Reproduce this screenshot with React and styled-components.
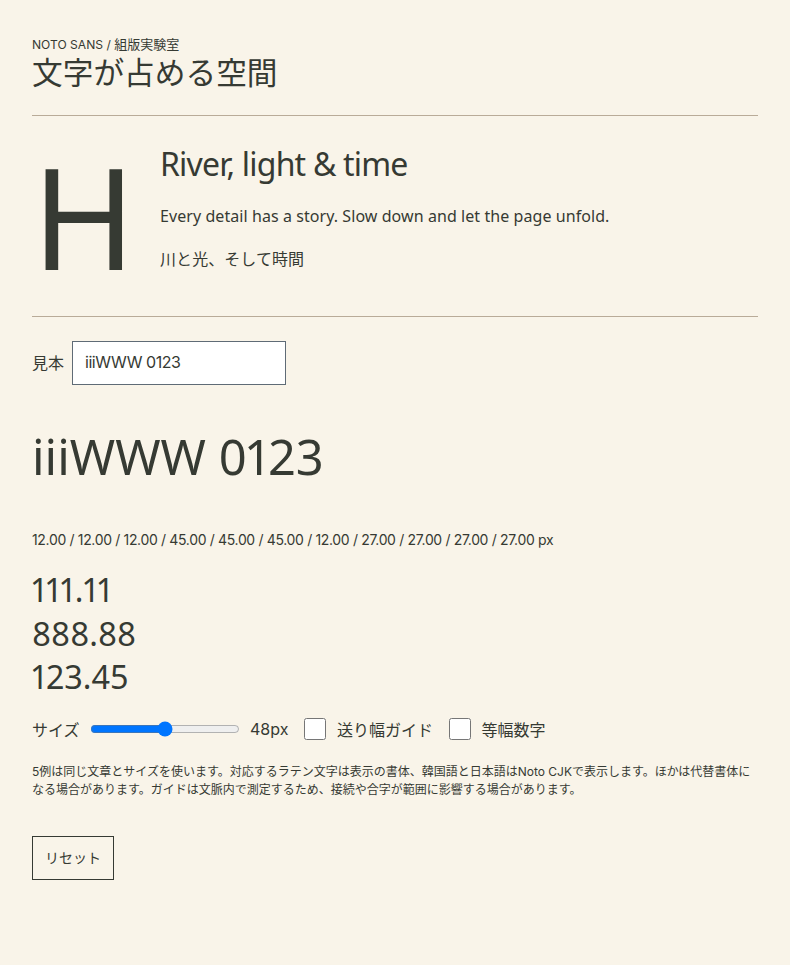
import styled, { createGlobalStyle } from "styled-components";

const UI_FONT = `Inter, "Noto Sans CJK JP", sans-serif`;
const TEXT_FONT = `"Noto Sans", "Noto Sans CJK JP", sans-serif`;

const GlobalStyle = createGlobalStyle`
  html, body {
    margin: 0;
    background: #f9f4e9;
  }
`;

const App = () => {
  return (
    <Page>
      <GlobalStyle />
      <Header>
        <Eyebrow>NOTO SANS / <EyebrowJa>組版実験室</EyebrowJa></Eyebrow>
        <Title>文字が占める空間</Title>
      </Header>
      <Hero>
        <BigLetter>H</BigLetter>
        <HeroCopy>
          <HeroTitle>River, light &amp; time</HeroTitle>
          <HeroText>Every detail has a story. Slow down and let the page unfold.</HeroText>
          <HeroText>川と光、そして時間</HeroText>
        </HeroCopy>
      </Hero>
      <SampleRow>
        <SampleLabel htmlFor="sample">見本</SampleLabel>
        <SampleInput id="sample" defaultValue="iiiWWW 0123" />
      </SampleRow>
      <Specimen>iiiWWW 0123</Specimen>
      <Metrics>12.00 / 12.00 / 12.00 / 45.00 / 45.00 / 45.00 / 12.00 / 27.00 / 27.00 / 27.00 / 27.00 px</Metrics>
      <Numbers>
        <div>111.11</div>
        <div>888.88</div>
        <div>123.45</div>
      </Numbers>
      <Controls>
        <Field>
          <ControlLabel>サイズ</ControlLabel>
          <Slider type="range" min="16" max="80" defaultValue="48" />
          <ControlLabel>48px</ControlLabel>
        </Field>
        <Field>
          <Check type="checkbox" />
          <ControlLabel>送り幅ガイド</ControlLabel>
        </Field>
        <Field>
          <Check type="checkbox" />
          <ControlLabel>等幅数字</ControlLabel>
        </Field>
      </Controls>
      <Note>
        5例は同じ文章とサイズを使います。対応するラテン文字は表示の書体、韓国語と日本語はNoto CJKで表示します。ほかは代替書体になる場合があります。ガイドは文脈内で測定するため、接続や合字が範囲に影響する場合があります。
      </Note>
      <ResetButton type="button">リセット</ResetButton>
    </Page>
  );
};
export default App;

//==============================styled-components

const Page = styled.main`
  box-sizing: border-box;
  width: 790px;
  min-height: 965px;
  padding: 36px 32px 0;
  color: #363a33;
  font-family: ${UI_FONT};
`;

const Header = styled.header`
  height: 79px;
  border-bottom: 1px solid #b9ab98;
`;

const Eyebrow = styled.div`
  font-size: 12.1px;
  line-height: 17px;
`;

const EyebrowJa = styled.span`
  font-size: 13px;
`;

const Title = styled.h1`
  margin: 0;
  font-family: ${UI_FONT};
  font-size: 30.7px;
  font-weight: 400;
  line-height: 40px;
`;

const Hero = styled.section`
  display: flex;
  height: 200px;
  border-bottom: 1px solid #b9ab98;
`;

const BigLetter = styled.div`
  width: 128px;
  flex: none;
  font-family: ${TEXT_FONT};
  font-size: 140px;
  line-height: 200px;
`;

const HeroCopy = styled.div`
  padding-top: 27px;
  font-family: ${TEXT_FONT};
`;

const HeroTitle = styled.h2`
  margin: 0 0 18px;
  font-size: 32px;
  font-weight: 400;
  line-height: 42px;
  letter-spacing: -0.8px;
`;

const HeroText = styled.p`
  margin: 0 0 17px;
  font-size: 16px;
  line-height: 26px;
  letter-spacing: 0.07px;
`;

const SampleRow = styled.div`
  display: flex;
  align-items: center;
  gap: 8px;
  margin-top: 24px;
`;

const SampleLabel = styled.label`
  padding-bottom: 2px;
  font-size: 16px;
`;

const SampleInput = styled.input`
  box-sizing: border-box;
  width: 214px;
  height: 44px;
  padding: 0 12px 2px;
  border: 1px solid #5f6b76;
  border-radius: 0;
  background: #fff;
  color: #363a33;
  font-family: ${UI_FONT};
  font-size: 16px;
  letter-spacing: -0.45px;
`;

const Specimen = styled.div`
  margin-top: 40px;
  font-family: ${TEXT_FONT};
  font-size: 48.8px;
  line-height: 62px;
  font-variant-numeric: proportional-nums;
`;

const Metrics = styled.div`
  margin-top: 44px;
  font-size: 14px;
  line-height: 18px;
  letter-spacing: -0.34px;
`;

const Numbers = styled.div`
  margin-top: 19px;
  font-family: ${TEXT_FONT};
  font-size: 32.4px;
  line-height: 43.5px;
  font-variant-numeric: proportional-nums;
`;

const Controls = styled.div`
  display: flex;
  align-items: center;
  gap: 16px;
  height: 24px;
  margin-top: 18px;
`;

const Field = styled.div`
  display: flex;
  align-items: center;
  gap: 10.5px;
`;

const ControlLabel = styled.span`
  font-size: 16px;
`;

const Slider = styled.input`
  width: 149.5px;
  margin: 0;
`;

const Check = styled.input`
  width: 22px;
  height: 22px;
  margin: 0;
`;

const Note = styled.p`
  margin: 22px 0 0;
  font-size: 12px;
  line-height: 18px;
`;

const ResetButton = styled.button`
  display: block;
  box-sizing: border-box;
  width: 82px;
  height: 44px;
  margin-top: 37px;
  padding: 0 0 2px;
  border: 1px solid #363a33;
  border-radius: 0;
  background: transparent;
  color: #363a33;
  font-family: ${UI_FONT};
  font-size: 14px;
`;
